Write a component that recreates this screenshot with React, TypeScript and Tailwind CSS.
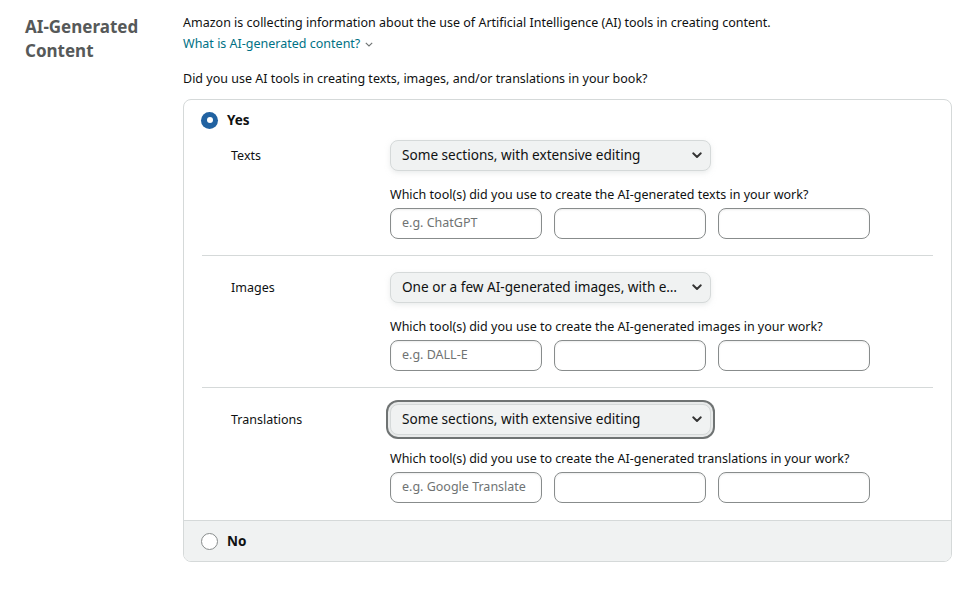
import React from "react";

const font = { fontFamily: '"Noto Sans", "Open Sans", Arial, sans-serif' };

function Chevron() {
  return (
    <svg width="10" height="7" viewBox="0 0 10 7" className="shrink-0">
      <path d="M1.2 1.3 L5 5 L8.8 1.3" fill="none" stroke="#333" strokeWidth="1.9" strokeLinecap="round" strokeLinejoin="round" />
    </svg>
  );
}

function Select({ value, focused }: { value: string; focused?: boolean }) {
  return (
    <div
      className={
        "w-[321px] h-[31px] rounded-[8px] border border-[#d5d9d9] bg-[#f0f2f2] flex items-center justify-between gap-[10px] pl-[11px] pr-[8px] text-[13.6px] text-[#0f1111] " +
        (focused
          ? "shadow-[0_0_0_2px_#e8eaea,0_0_0_4px_#6f7373]"
          : "shadow-[0_2px_5px_0_rgba(213,217,217,0.5)]")
      }
    >
      <span className="truncate">{value}</span>
      <Chevron />
    </div>
  );
}

function Input({ placeholder }: { placeholder?: string }) {
  return (
    <div className="w-[152px] h-[31px] rounded-[8px] border border-[#888c8c] flex items-center px-[11px] text-[12.5px] whitespace-nowrap overflow-hidden text-[#6f7373] bg-white shadow-[inset_0_1px_2px_rgba(15,17,17,0.08)]">
      {placeholder}
    </div>
  );
}

function Section({
  label,
  value,
  kind,
  placeholder,
  focused,
  divider,
  first,
}: {
  label: string;
  value: string;
  kind: string;
  placeholder: string;
  focused?: boolean;
  divider?: boolean;
  first?: boolean;
}) {
  return (
    <div
      className={
        "mx-[18px] flex " +
        (first ? "pt-0 " : "pt-[16px] ") +
        (divider ? "pb-[16px] border-b border-[#d5d9d9]" : "pb-[17px]")
      }
    >
      <div className="w-[188px] pl-[29px] h-[31px] flex items-center pt-[1px] text-[12.5px] text-[#0f1111]">{label}</div>
      <div className="flex flex-col">
        <Select value={value} focused={focused} />
        <div className="mt-[16px] text-[12.5px] leading-[16px] text-[#0f1111]">
          Which tool(s) did you use to create the AI-generated {kind} in your work?
        </div>
        <div className="mt-[5px] flex gap-[12px]">
          <Input placeholder={placeholder} />
          <Input />
          <Input />
        </div>
      </div>
    </div>
  );
}

export default function App() {
  return (
    <div className="w-[974px] h-[594px] bg-white flex pl-[25px] pt-[15px]" style={font}>
      <div className="w-[158px] text-[17px] leading-[24px] font-bold text-[#565959]">
        AI-Generated
        <br />
        Content
      </div>
      <div className="flex flex-col">
        <div className="mt-[-2px] text-[12.5px] leading-[20px] text-[#0f1111]">
          Amazon is collecting information about the use of Artificial Intelligence (AI) tools in creating content.
        </div>
        <div className="mt-[1px] text-[12.5px] leading-[20px] text-[#007185] flex items-center gap-[5px]">
          What is AI-generated content?
          <svg width="8" height="5" viewBox="0 0 8 5">
            <path d="M0.8 0.8 L4 4 L7.2 0.8" fill="none" stroke="#6f7373" strokeWidth="1.1" />
          </svg>
        </div>
        <div className="mt-[15px] text-[12.5px] leading-[20px] text-[#0f1111]">
          Did you use AI tools in creating texts, images, and/or translations in your book?
        </div>
        <div className="mt-[10px] w-[769px] rounded-[8px] border border-[#d5d9d9] overflow-hidden">
          <div className="h-[40px] flex items-center pl-[17px] gap-[9px]">
            <div className="w-[17px] h-[17px] rounded-full bg-[#2162a1] flex items-center justify-center">
              <div className="w-[6px] h-[6px] rounded-full bg-white" />
            </div>
            <span className="text-[13.5px] font-bold text-[#0f1111]">Yes</span>
          </div>
          <Section first divider label="Texts" value="Some sections, with extensive editing" kind="texts" placeholder="e.g. ChatGPT" />
          <Section divider label="Images" value="One or a few AI-generated images, with extensive editing" kind="images" placeholder="e.g. DALL-E" />
          <Section focused label="Translations" value="Some sections, with extensive editing" kind="translations" placeholder="e.g. Google Translate" />
          <div className="h-[41px] bg-[#f0f2f2] border-t border-[#d5d9d9] flex items-center pl-[17px] gap-[9px]">
            <div className="w-[17px] h-[17px] rounded-full bg-white border border-[#888c8c]" />
            <span className="text-[13.5px] font-bold text-[#0f1111]">No</span>
          </div>
        </div>
      </div>
    </div>
  );
}
